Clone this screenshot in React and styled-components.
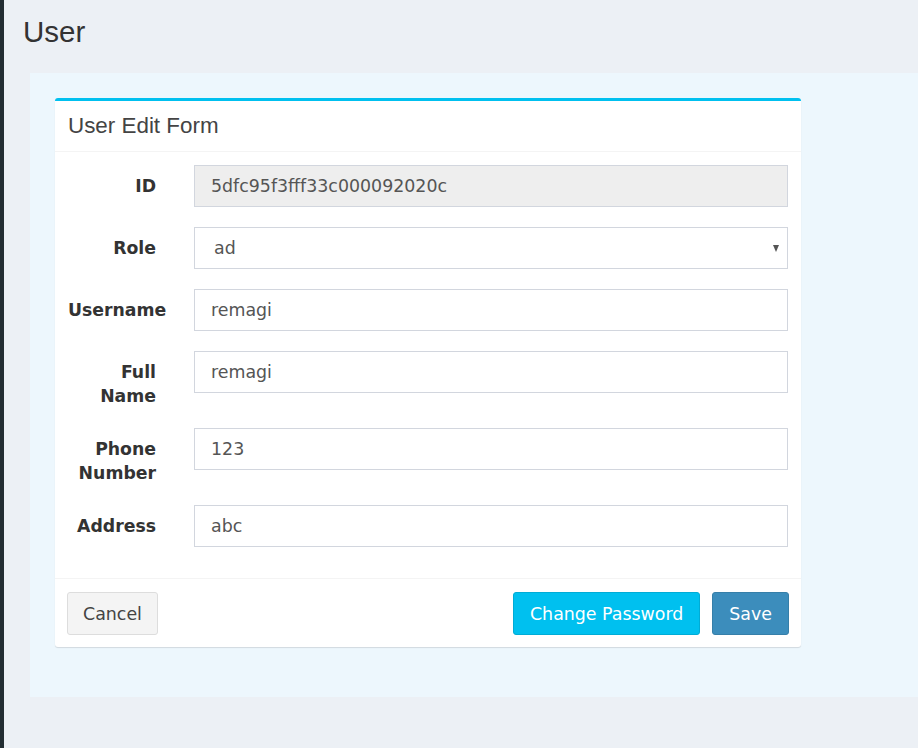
import React from "react";
import styled, { createGlobalStyle } from "styled-components";

const Global = createGlobalStyle`
  html, body { margin: 0; padding: 0; }
  body {
    background: #ecf0f5;
    font-family: "DejaVu Sans", Verdana, sans-serif;
    color: #333;
  }
  * { box-sizing: border-box; }
`;

const Page = styled.div`
  display: flex;
  min-height: 748px;
  width: 918px;
  overflow: hidden;
`;

const SideStrip = styled.div`
  width: 4px;
  flex: none;
  background: #222d32;
`;

const Content = styled.div`
  flex: 1;
  display: flex;
  flex-direction: column;
`;

const PageTitle = styled.h1`
  margin: 0;
  padding: 13px 0 0 19px;
  height: 73px;
  font-family: "Liberation Sans", Arial, sans-serif;
  font-weight: 400;
  font-size: 29.5px;
  line-height: 38px;
  color: #333;
`;

const Panel = styled.div`
  margin-left: 26px;
  margin-right: -20px;
  background: #edf7fd;
  padding: 25px 0 50px 25px;
`;

const Card = styled.div`
  width: 746px;
  background: #fff;
  border-top: 3px solid #00c0ef;
  border-radius: 3px;
  box-shadow: 0 1px 1px rgba(0, 0, 0, 0.12);
`;

const CardHeader = styled.div`
  height: 51px;
  padding: 0 13px;
  display: flex;
  align-items: center;
  border-bottom: 1px solid #f4f4f4;
  font-family: "Liberation Sans", Arial, sans-serif;
  font-size: 22.4px;
  color: #444;
`;

const CardBody = styled.div`
  padding: 13px 13px 31px 13px;
  display: flex;
  flex-direction: column;
  gap: 20px;
`;

const Row = styled.div`
  display: grid;
  grid-template-columns: 88px 1fr;
  column-gap: 38px;
  align-items: start;
`;

const Label = styled.label`
  display: block;
  padding-top: 9px;
  text-align: right;
  font-weight: 700;
  font-size: 17.3px;
  line-height: 24px;
  color: #333;
`;

const Input = styled.input`
  display: block;
  width: 100%;
  height: 42px;
  border: 1px solid #d2d6de;
  border-radius: 0;
  padding: 0 16px;
  font-family: "DejaVu Sans", Verdana, sans-serif;
  font-size: 17.4px;
  color: #555;
  background: ${(p) => (p.disabled ? "#eeeeee" : "#fff")};
  outline: none;
  &:disabled { color: #555; -webkit-text-fill-color: #555; opacity: 1; }
`;

const SelectWrap = styled.div`
  position: relative;
  &::after {
    content: "";
    position: absolute;
    right: 9px;
    top: 18px;
    border-left: 3.5px solid transparent;
    border-right: 3.5px solid transparent;
    border-top: 7px solid #555;
    pointer-events: none;
  }
`;

const Select = styled.select`
  display: block;
  appearance: none;
  -webkit-appearance: none;
  width: 100%;
  height: 42px;
  border: 1px solid #d2d6de;
  border-radius: 0;
  padding: 0 16px 0 19px;
  font-family: "DejaVu Sans", Verdana, sans-serif;
  font-size: 17.4px;
  color: #555;
  background: #fff;
  outline: none;
`;

const CardFooter = styled.div`
  border-top: 1px solid #f4f4f4;
  padding: 13px 12px 12px 12px;
  display: flex;
  align-items: center;
  gap: 12px;
`;

const Spacer = styled.div`
  flex: 1;
`;

const Button = styled.button`
  height: 43px;
  padding: 0 ${(p) => (p.$variant ? 16 : 15)}px;
  border-radius: 3px;
  font-family: "DejaVu Sans", Verdana, sans-serif;
  font-size: 17.4px;
  cursor: pointer;
  border: 1px solid
    ${(p) =>
      p.$variant === "info" ? "#00acd6" : p.$variant === "primary" ? "#367fa9" : "#ddd"};
  background: ${(p) =>
    p.$variant === "info" ? "#00c0ef" : p.$variant === "primary" ? "#3c8dbc" : "#f4f4f4"};
  color: ${(p) => (p.$variant ? "#fff" : "#444")};
`;

const fields = [
  { label: "Username", value: "remagi" },
  { label: "Full Name", value: "remagi" },
  { label: "Phone Number", value: "123" },
  { label: "Address", value: "abc" },
];

export default function App() {
  return (
    <Page>
      <Global />
      <SideStrip />
      <Content>
        <PageTitle>User</PageTitle>
        <Panel>
          <Card>
            <CardHeader>User Edit Form</CardHeader>
            <CardBody>
              <Row>
                <Label>ID</Label>
                <Input disabled defaultValue="5dfc95f3fff33c000092020c" />
              </Row>
              <Row>
                <Label>Role</Label>
                <SelectWrap>
                  <Select defaultValue="ad">
                    <option value="ad">ad</option>
                    <option value="user">user</option>
                  </Select>
                </SelectWrap>
              </Row>
              {fields.map((f) => (
                <Row key={f.label}>
                  <Label>{f.label}</Label>
                  <Input defaultValue={f.value} />
                </Row>
              ))}
            </CardBody>
            <CardFooter>
              <Button>Cancel</Button>
              <Spacer />
              <Button $variant="info">Change Password</Button>
              <Button $variant="primary">Save</Button>
            </CardFooter>
          </Card>
        </Panel>
      </Content>
    </Page>
  );
}
